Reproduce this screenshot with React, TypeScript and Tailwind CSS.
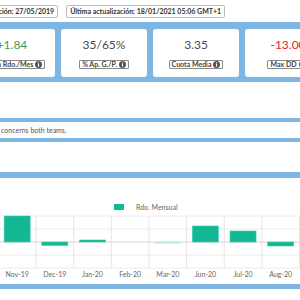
const cats = ["Nov-19", "Dec-19", "Jan-20", "Feb-20", "Mar-20", "Jun-20", "Jul-20", "Aug-20"];
// bar extents relative to zero line (negative = up)
const bars: [number, number, boolean][] = [
  [38, 64, false],
  [64, 67.5, false],
  [62, 64, false],
  [64, 64, false],
  [64, 65.2, true],
  [48, 64, false],
  [53, 64, false],
  [64, 68, false],
];

const Info = () => (
  <svg width="7" height="7" viewBox="0 0 10 10" className="ml-[2px] shrink-0">
    <circle cx="5" cy="5" r="5" fill="#555" />
    <rect x="4.2" y="4.2" width="1.6" height="3.8" fill="#fff" />
    <circle cx="5" cy="2.7" r="0.95" fill="#fff" />
  </svg>
);

const StatCard = ({ value, label, color }: { value: string; label: string; color: string }) => (
  <div className="w-[86px] h-[48px] shrink-0 rounded-[3px] bg-white flex flex-col items-center pt-[9px]">
    <div className={`text-[12px] leading-[14px] ${color}`}>{value}</div>
    <div className="mt-[8px] flex items-center border border-[#8a8a8a] rounded-[1px] px-[2px] h-[9px] text-[7px] font-bold text-[#444] leading-none whitespace-nowrap">
      {label}
      <Info />
    </div>
  </div>
);

const Chart = () => {
  const step = 37.65;
  const x0 = -1.65;
  return (
    <svg width="300" height="106" viewBox="0 0 300 106" className="block">
      <rect x="114" y="26" width="10" height="6" fill="#12b893" />
      <text x="136" y="32" fontSize="7" fill="#666" fontFamily="Lato, sans-serif">
        Rdo. Mensual
      </text>
      {[38, 51, 77, 90].map((y) => (
        <line key={y} x1="0" x2="300" y1={y} y2={y} stroke="#ececec" strokeWidth="1" />
      ))}
      {cats.map((_, i) => (
        <line
          key={i}
          x1={x0 + step * (i + 1)}
          x2={x0 + step * (i + 1)}
          y1="38"
          y2="90"
          stroke="#e6e6e6"
          strokeWidth="1"
        />
      ))}
      <line x1="0" x2="300" y1="64" y2="64" stroke="#d4d4d4" strokeWidth="1" />
      {bars.map(([y1, y2, light], i) =>
        y2 > y1 ? (
          <rect
            key={i}
            x={x0 + step * i + 5.8}
            y={y1}
            width="26"
            height={y2 - y1}
            fill={light ? "#a9e6d6" : "#12b893"}
            stroke={light ? "#c8efe4" : "#3fcaa8"}
            strokeWidth="0.6"
          />
        ) : null
      )}
      {cats.map((c, i) => (
        <text
          key={c}
          x={x0 + step * i + step / 2}
          y="99"
          fontSize="7"
          fill="#666"
          textAnchor="middle"
          fontFamily="Lato, sans-serif"
        >
          {c}
        </text>
      ))}
    </svg>
  );
};

export default function App() {
  return (
    <div className="w-[300px] h-[300px] overflow-hidden bg-white font-['Lato',sans-serif]">
      <div className="h-[22px] flex items-center gap-[8px] ml-[-48px] whitespace-nowrap">
        <div className="border border-[#bdbdbd] rounded-[2px] px-[3px] h-[13px] flex items-center text-[7px] font-bold text-[#333]">
          Fecha de creación: 27/05/2019
        </div>
        <div className="border border-[#bdbdbd] rounded-[2px] px-[3px] h-[13px] flex items-center text-[7px] font-bold text-[#333]">
          Última actualización: 18/01/2021 05:06 GMT+1
        </div>
      </div>
      <div className="bg-[#7db5e3] pt-[7px] pb-[5px]">
        <div className="flex gap-[6px] ml-[-31px]">
          <StatCard value="+1.84" label="Media Rdo./Mes" color="text-[#3d9b5a]" />
          <StatCard value="35/65%" label="% Ap. G./P." color="text-[#4a4a4a]" />
          <StatCard value="3.35" label="Cuota Media" color="text-[#4a4a4a]" />
          <StatCard value="-13.00" label="Max DD" color="text-[#ec2424]" />
        </div>
      </div>
      <div className="h-[36px]" />
      <div className="h-[4px] bg-[#7db5e3]" />
      <div className="h-[16px] flex items-center pl-[1px] text-[7px] text-[#555] whitespace-nowrap">
        concerns both teams.
      </div>
      <div className="h-[4px] bg-[#7db5e3]" />
      <div className="h-[30px]" />
      <div className="h-[6px] bg-[#7db5e3]" />
      <Chart />
      <div className="h-[5px] bg-[#7db5e3]" />
    </div>
  );
}
